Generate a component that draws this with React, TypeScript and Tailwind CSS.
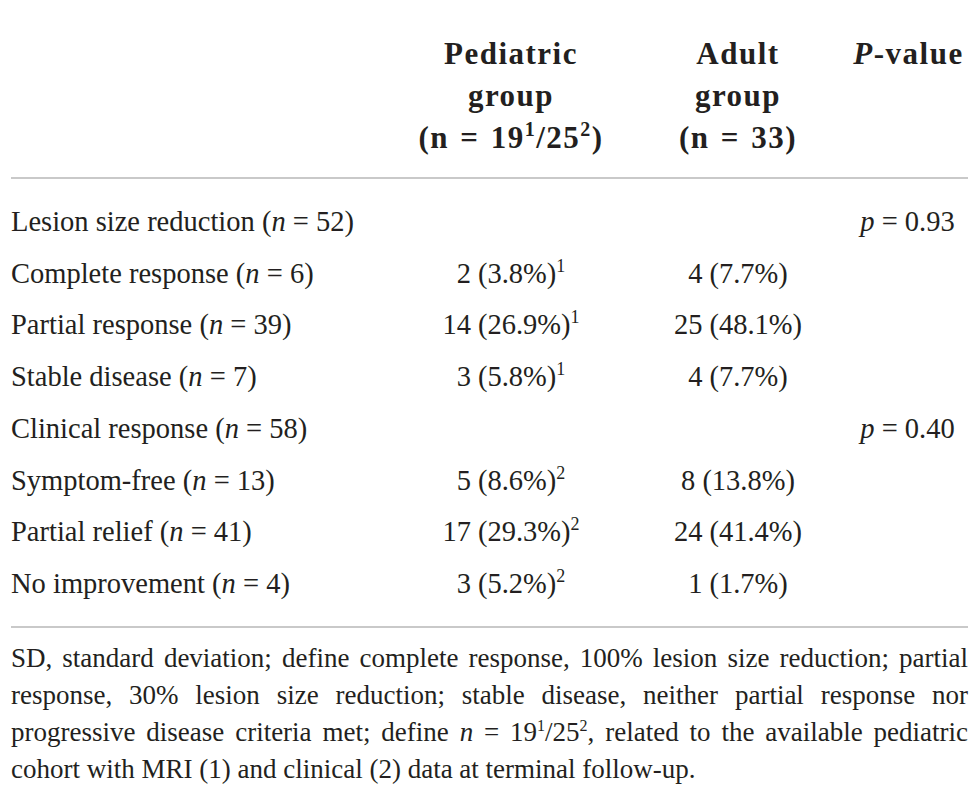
const rows = [
  { label: 'Lesion size reduction', n: '52', ped: '', pedSup: '', adult: '', p: '0.93' },
  { label: 'Complete response', n: '6', ped: '2 (3.8%)', pedSup: '1', adult: '4 (7.7%)', p: '' },
  { label: 'Partial response', n: '39', ped: '14 (26.9%)', pedSup: '1', adult: '25 (48.1%)', p: '' },
  { label: 'Stable disease', n: '7', ped: '3 (5.8%)', pedSup: '1', adult: '4 (7.7%)', p: '' },
  { label: 'Clinical response', n: '58', ped: '', pedSup: '', adult: '', p: '0.40' },
  { label: 'Symptom-free', n: '13', ped: '5 (8.6%)', pedSup: '2', adult: '8 (13.8%)', p: '' },
  { label: 'Partial relief', n: '41', ped: '17 (29.3%)', pedSup: '2', adult: '24 (41.4%)', p: '' },
  { label: 'No improvement', n: '4', ped: '3 (5.2%)', pedSup: '2', adult: '1 (1.7%)', p: '' },
];

export default function App() {
  return (
    <div className="w-[979px] h-[798px] bg-white px-[11px] text-[#231f20] font-['Liberation_Serif',serif]">
      {/* Header */}
      <div className="grid grid-cols-[388px_224px_230px_1fr] pt-[33px] text-[31px] leading-[42px] font-bold tracking-[1.5px] text-center">
        <div></div>
        <div>
          Pediatric
          <br />
          group
          <br />
          <span className="[word-spacing:2px] whitespace-nowrap">
            (n = 19<sup className="text-[20px] -top-[12px]">1</sup>/25<sup className="text-[20px] -top-[12px]">2</sup>)
          </span>
        </div>
        <div>
          Adult
          <br />
          group
          <br />
          <span className="[word-spacing:2px]">(n = 33)</span>
        </div>
        <div className="pr-[4px]">
          <i>P</i>-value
        </div>
      </div>

      <div className="mt-[18px] h-[2px] bg-[#c9c9c9]"></div>

      {/* Rows */}
      <div className="mt-[17px] text-[28.5px] leading-[51.7px]">
        {rows.map((r) => (
          <div key={r.label} className="grid grid-cols-[388px_224px_230px_1fr]">
            <div className="whitespace-nowrap">
              {r.label} (<i>n</i> = {r.n})
            </div>
            <div className="text-center whitespace-nowrap">
              {r.ped}
              {r.pedSup && <sup className="text-[18px] -top-[11px]">{r.pedSup}</sup>}
            </div>
            <div className="text-center whitespace-nowrap">{r.adult}</div>
            <div className="text-center whitespace-nowrap pr-[6px]">
              {r.p && (
                <>
                  <i>p</i> = {r.p}
                </>
              )}
            </div>
          </div>
        ))}
      </div>

      <div className="mt-[16px] h-[2px] bg-[#c9c9c9]"></div>

      {/* Footnote, one block per printed line so the breaks match */}
      <div className="mt-[12px] text-[27px] leading-[37px]">
        <div className="text-justify [text-align-last:justify]">
          SD, standard deviation; define complete response, 100% lesion size reduction; partial
        </div>
        <div className="text-justify [text-align-last:justify]">
          response, 30% lesion size reduction; stable disease, neither partial response nor
        </div>
        <div className="text-justify [text-align-last:justify]">
          progressive disease criteria met; define <i>n</i> = 19<sup className="text-[16px] -top-[10px]">1</sup>/25
          <sup className="text-[16px] -top-[10px]">2</sup>, related to the available pediatric
        </div>
        <div>cohort with MRI (1) and clinical (2) data at terminal follow-up.</div>
      </div>
    </div>
  );
}
